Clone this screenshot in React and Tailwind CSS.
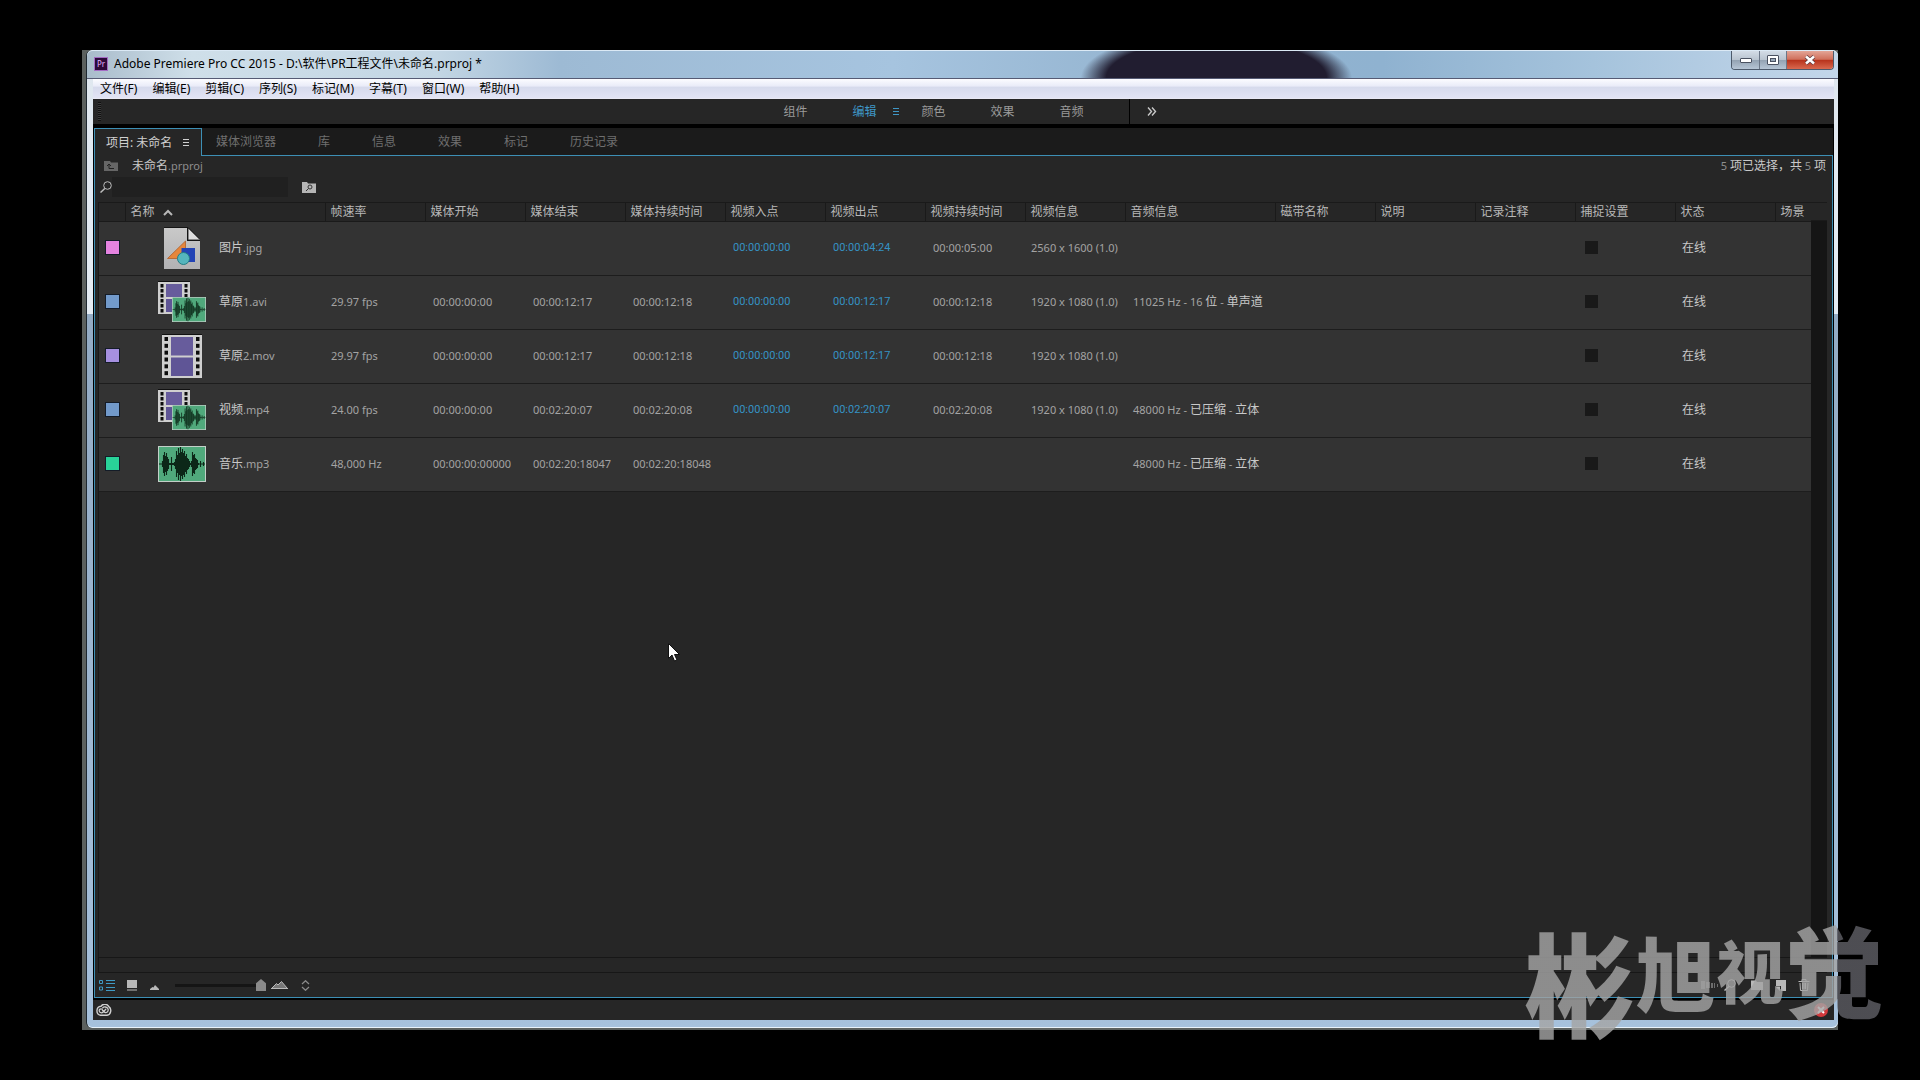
import { useState } from "react";
import clsx from "clsx";

const menus = ["文件(F)", "编辑(E)", "剪辑(C)", "序列(S)", "标记(M)", "字幕(T)", "窗口(W)", "帮助(H)"];
const workspaces = ["组件", "编辑", "颜色", "效果", "音频"];
const otherTabs = ["媒体浏览器", "库", "信息", "效果", "标记", "历史记录"];

const columns = [
  { key: "rate", label: "帧速率", pad: "pl-[6px]" },
  { key: "mediaStart", label: "媒体开始", pad: "pl-[8px]" },
  { key: "mediaEnd", label: "媒体结束", pad: "pl-[8px]" },
  { key: "mediaDuration", label: "媒体持续时间", pad: "pl-[8px]" },
  { key: "videoIn", label: "视频入点", pad: "pl-[8px]", hot: true },
  { key: "videoOut", label: "视频出点", pad: "pl-[8px]", hot: true },
  { key: "videoDuration", label: "视频持续时间", pad: "pl-[8px]" },
  { key: "videoInfo", label: "视频信息", pad: "pl-[6px]" },
  { key: "audioInfo", label: "音频信息", pad: "pl-[8px]", wide: true },
  { key: "tape", label: "磁带名称", pad: "pl-[6px]" },
  { key: "description", label: "说明", pad: "pl-[6px]" },
  { key: "logNote", label: "记录注释", pad: "pl-[6px]" },
  { key: "capture", label: "捕捉设置", pad: "pl-[10px]", check: true },
  { key: "status", label: "状态", pad: "pl-[7px]" },
];

const clips = [
  {
    name: "图片.jpg", kind: "image", swatch: "bg-[#e583e0]",
    videoIn: "00:00:00:00", videoOut: "00:00:04:24", videoDuration: "00:00:05:00",
    videoInfo: "2560 x 1600 (1.0)", status: "在线",
  },
  {
    name: "草原1.avi", kind: "av", swatch: "bg-[#729acb]", rate: "29.97 fps",
    mediaStart: "00:00:00:00", mediaEnd: "00:00:12:17", mediaDuration: "00:00:12:18",
    videoIn: "00:00:00:00", videoOut: "00:00:12:17", videoDuration: "00:00:12:18",
    videoInfo: "1920 x 1080 (1.0)", audioInfo: "11025 Hz - 16 位 - 单声道", status: "在线",
  },
  {
    name: "草原2.mov", kind: "video", swatch: "bg-[#a690e0]", rate: "29.97 fps",
    mediaStart: "00:00:00:00", mediaEnd: "00:00:12:17", mediaDuration: "00:00:12:18",
    videoIn: "00:00:00:00", videoOut: "00:00:12:17", videoDuration: "00:00:12:18",
    videoInfo: "1920 x 1080 (1.0)", status: "在线",
  },
  {
    name: "视频.mp4", kind: "av", swatch: "bg-[#729acb]", rate: "24.00 fps",
    mediaStart: "00:00:00:00", mediaEnd: "00:02:20:07", mediaDuration: "00:02:20:08",
    videoIn: "00:00:00:00", videoOut: "00:02:20:07", videoDuration: "00:02:20:08",
    videoInfo: "1920 x 1080 (1.0)", audioInfo: "48000 Hz - 已压缩 - 立体", status: "在线",
  },
  {
    name: "音乐.mp3", kind: "audio", swatch: "bg-[#29d398]", rate: "48,000 Hz",
    mediaStart: "00:00:00:00000", mediaEnd: "00:02:20:18047", mediaDuration: "00:02:20:18048",
    audioInfo: "48000 Hz - 已压缩 - 立体", status: "在线",
  },
];

// Chinese runs are set one size up and brighter than the latin text around them
function Mixed({ text }) {
  return text.split(/([\u4e00-\u9fff]+)/).map((part, i) =>
    i % 2 ? (
      <span key={i} className="text-xs text-[#c9c9c9]">{part}</span>
    ) : (
      part
    )
  );
}

function ImageThumb() {
  return (
    <svg width="36" height="42" viewBox="0 0 36 42">
      <defs>
        <linearGradient id="paper" x1="0" y1="0" x2="0" y2="1">
          <stop offset="0" stopColor="#c9c9c9" />
          <stop offset="1" stopColor="#b2b2b4" />
        </linearGradient>
      </defs>
      <path d="M0 1H23V14H36V42H0Z" fill="url(#paper)" />
      <path d="M24.500 1.500L36 12.500H24.500Z" fill="#dedede" />
      <path d="M0 0.500H24L36 12.500M23.500 1V13.500H36" fill="none" stroke="#151515" />
      <path d="M21.500 14V31.500H3.500Z" fill="#e6863b" stroke="#b0602a" strokeWidth="0.800" />
      <rect x="17.500" y="21" width="13.500" height="14" fill="#2343b5" />
      <circle cx="19.500" cy="31.500" r="6" fill="#55b5bd" stroke="#237d84" />
    </svg>
  );
}

function Film({ x = 0, y = 0, w, h, hole, rows }) {
  const step = (h - 2) / rows;
  const side = hole * 2 + 2;
  return (
    <g transform={`translate(${x} ${y})`}>
      <rect y="-1" width={w} height="1" fill="#111" />
      <rect width={w} height={h} fill="#cfcfcf" />
      <rect x={side} y="2" width={w - side * 2} height={h / 2 - 3} fill="#675c9c" />
      <rect x={side} y={h / 2 + 1} width={w - side * 2} height={h / 2 - 3} fill="#5f5596" />
      {Array.from({ length: rows }, (_, i) => (
        <g key={i} fill="#0c0c0c">
          <rect x="2.500" y={2 + i * step} width={hole} height={hole + 0.5} />
          <rect x={w - 2.5 - hole} y={2 + i * step} width={hole} height={hole + 0.5} />
        </g>
      ))}
    </g>
  );
}

const levels = [
  0.5, 0.5, 0.5, 3, 9, 12, 8, 11, 7, 5, 1, 1, 7, 1, 1, 2, 5, 13, 9, 16, 11, 17, 12,
  15, 11, 13, 8, 10, 6, 5, 3, 1, 3, 12, 9, 10, 6, 5, 4, 1, 0.5, 3, 0.5, 0.5, 2, 0.5,
];
const wave = levels.map((level, i) => `M${i + 1.5} ${18 - level}v${level * 2}`).join("");

function WaveThumb({ x = 0, y = 0, w = 48, h = 36 }) {
  return (
    <svg x={x} y={y} width={w} height={h} viewBox="0 0 48 36" preserveAspectRatio="none">
      <rect width="48" height="36" fill="#c3cfc8" />
      <rect x="1" y="1" width="46" height="34" fill="#50a97c" />
      <path d={wave} stroke="#0c2718" strokeWidth="1.100" />
    </svg>
  );
}

function Thumb({ kind }) {
  if (kind === "image") return <ImageThumb />;
  if (kind === "audio") return <WaveThumb />;
  if (kind === "video") {
    return (
      <svg width="40" height="44" viewBox="0 0 40 44">
        <Film y={1} w={40} h={43} hole={3.5} rows={6} />
      </svg>
    );
  }
  return (
    <svg width="48" height="41" viewBox="0 0 48 41">
      <Film y={1} w={32} h={32} hole={3} rows={6} />
      <WaveThumb x={14} y={16} w={34} h={25} />
    </svg>
  );
}

function MenuLines({ className }) {
  return (
    <svg width="6" height="9" viewBox="0 0 6 9" className={className}>
      <path d="M0 1.500H6M0 4.500H6M0 7.500H6" stroke="currentColor" />
    </svg>
  );
}

function TitleBar() {
  return (
    <header className="flex h-[29px] shrink-0 items-start justify-between rounded-t-md border-t border-b border-t-[#dbe9f5] border-b-[#565b74] bg-[radial-gradient(128px_45px_at_64.5%_100%,#211d30_86%,#4a5a7800_106%),linear-gradient(90deg,#a9bccb_0,#cfdfe9_6%,#c3d6e4_20%,#9dbad4_27%,#a6c4df_46%,#93b3cf_62%,#8fb2d0_74%,#a5c3dc_86%,#c3d6ea_100%)]">
      <div className="flex h-[26px] items-center gap-[6px] pl-[7px] text-xs text-black">
        <span className="flex size-[14px] items-center justify-center border border-[#a46cc4] bg-[#2d0a3a] text-[8px] leading-none text-[#e0b0ff]">
          Pr
        </span>
        <h1>Adobe Premiere Pro CC 2015 - D:\软件\PR工程文件\未命名.prproj *</h1>
      </div>
      <div className="mr-[4px] flex h-[19px] overflow-hidden rounded-b border border-t-0 border-[#4d5a6b]">
        <button type="button" aria-label="最小化" className="flex w-[28px] items-center justify-center border-r border-[#6b7788] bg-[linear-gradient(#d3dce6_0,#b9c4d0_48%,#94a3b3_52%,#b6c5d5_100%)]">
          <svg width="12" height="5" viewBox="0 0 12 5"><rect x="0.500" y="0.500" width="11" height="4" rx="0.500" fill="#fff" stroke="#4a5160" /></svg>
        </button>
        <button type="button" aria-label="最大化" className="flex w-[27px] items-center justify-center border-r border-[#6b7788] bg-[linear-gradient(#d3dce6_0,#b9c4d0_48%,#94a3b3_52%,#b6c5d5_100%)]">
          <svg width="12" height="10" viewBox="0 0 12 10">
            <rect x="0.500" y="0.500" width="11" height="9" rx="0.500" fill="#fff" stroke="#4a5160" />
            <rect x="3.500" y="3.500" width="5" height="3" fill="#9aa8b8" stroke="#4a5160" />
          </svg>
        </button>
        <button type="button" aria-label="关闭" className="flex w-[46px] items-center justify-center bg-[linear-gradient(#e3a597_0,#d0705c_46%,#b8341d_52%,#d9694f_100%)]">
          <svg width="12" height="10" viewBox="0 0 12 10">
            <path d="M2 1.500L10 8.500M10 1.500L2 8.500" stroke="#5b3a40" strokeWidth="4" />
            <path d="M2 1.500L10 8.500M10 1.500L2 8.500" stroke="#fff" strokeWidth="2.500" />
          </svg>
        </button>
      </div>
    </header>
  );
}

function WorkspaceBar() {
  const [active, setActive] = useState("编辑");

  return (
    <div className="flex h-[25px] shrink-0 items-stretch bg-[#262626] text-xs text-[#9a9a9a]">
      <div className="my-[3px] ml-[5px] w-[3px] bg-[repeating-linear-gradient(#111_0_1px,#3a3a3a_1px_2px)]" />
      <div className="flex flex-1 justify-center pl-5">
        {workspaces.map((name) => (
          <button
            type="button"
            key={name}
            onClick={() => setActive(name)}
            className={clsx("flex w-[69px] items-center gap-4", active === name && "text-[#3f97c6]")}
          >
            {name}
            {active === name && <MenuLines />}
          </button>
        ))}
        <button type="button" aria-label="更多" className="flex w-[43px] items-center border-l border-black pl-[17px] text-[#c8c8c8]">
          <svg width="10" height="9" viewBox="0 0 10 9">
            <path d="M1 0.500L4.500 4.500L1 8.500M5 0.500L8.500 4.500L5 8.500" fill="none" stroke="currentColor" strokeWidth="1.400" />
          </svg>
        </button>
      </div>
    </div>
  );
}

function PanelTabs() {
  return (
    <nav className="flex h-7 shrink-0 bg-[#1b1b1b] text-xs">
      <button type="button" className="flex w-[108px] items-center gap-[11px] border-x border-t border-[#3d8fb5] bg-[#262626] pl-[11px] whitespace-nowrap text-[#d0d0d0]">
        项目: 未命名
        <MenuLines />
      </button>
      <div className="flex flex-1 items-center gap-[42px] border-b border-[#3d8fb5] pl-[14px] text-[#6f6f6f]">
        {otherTabs.map((tab) => (
          <button type="button" key={tab}>{tab}</button>
        ))}
      </div>
    </nav>
  );
}

function ClipTable() {
  return (
    <table className="w-full table-fixed border-collapse text-left">
      <colgroup>
        <col className="w-[26px]" />
        <col className="w-[200px]" />
        {columns.map((col) => (
          <col key={col.key} className={col.wide ? "w-[150px]" : "w-[100px]"} />
        ))}
        <col />
      </colgroup>
      <thead>
        <tr className="h-[19px] border-y border-[#1a1a1a] text-xs leading-4 text-[#b8b8b8]">
          <th aria-label="标签" />
          <th className="border-l border-[#1a1a1a] pl-[5px] font-normal">
            <span className="flex items-center gap-2">
              名称
              <svg width="10" height="7" viewBox="0 0 10 7">
                <path d="M1 6L5 2L9 6" fill="none" stroke="currentColor" strokeWidth="2" />
              </svg>
            </span>
          </th>
          {columns.map((col) => (
            <th key={col.key} className="border-l border-[#1a1a1a] pl-[5px] font-normal whitespace-nowrap">{col.label}</th>
          ))}
          <th className="border-l border-[#1a1a1a] pl-[5px] font-normal whitespace-nowrap">场景</th>
        </tr>
      </thead>
      <tbody>
        {clips.map((clip) => (
          <tr key={clip.name} className="h-[54px] border-b border-[#1d1d1d] bg-[#333333] text-[11px] text-[#a3a3a3]">
            <td className="pb-[2px] pl-[6px]">
              <span className={clsx("block size-[15px] border border-[#141c28]", clip.swatch)} />
            </td>
            <td className="pl-[33px]">
              <div className="flex items-center gap-[13px]">
                <span className="mb-[2px] flex w-12 shrink-0 justify-center">
                  <Thumb kind={clip.kind} />
                </span>
                <span><Mixed text={clip.name} /></span>
              </div>
            </td>
            {columns.map((col) => (
              <td key={col.key} className={clsx("whitespace-nowrap", col.pad, col.hot && "font-[Roboto] text-[#3592c4]", col.check && "pb-[2px]")}>
                {col.check ? (
                  <input
                    type="checkbox"
                    aria-label={`${col.label} ${clip.name}`}
                    className="block size-[13px] appearance-none bg-[#191919] checked:bg-[#3592c4]"
                  />
                ) : (
                  clip[col.key] && <Mixed text={clip[col.key]} />
                )}
              </td>
            ))}
            <td />
          </tr>
        ))}
      </tbody>
    </table>
  );
}

function PanelFooter() {
  const [zoom, setZoom] = useState(100);

  return (
    <div className="flex h-6 shrink-0 items-center justify-between pr-[22px] pl-[4px] text-[#b9b9b9]">
      <div className="flex items-center">
        <button type="button" aria-label="列表视图" className="text-[#3f9ac4]">
          <svg width="16" height="11" viewBox="0 0 16 11">
            <path d="M0.500 0.500H3.500V3.500H0.500ZM0.500 7H3.500V10H0.500Z" fill="none" stroke="currentColor" />
            <path d="M7 0.500H16M7 3.500H16M7 7.500H16M7 10.500H16" stroke="currentColor" />
          </svg>
        </button>
        <button type="button" aria-label="图标视图" className="ml-3">
          <svg width="10" height="11" viewBox="0 0 10 11">
            <path d="M0 0H10V8H0ZM0 9.500H10V10.500H0Z" fill="currentColor" />
          </svg>
        </button>
        <svg width="9" height="5" viewBox="0 0 9 5" className="ml-[13px] mt-1">
          <path d="M0 5V4L2.500 2L3.500 2.500L5 0L9 4V5Z" fill="currentColor" />
        </svg>
        <input
          type="range"
          aria-label="缩放"
          value={zoom}
          onChange={(e) => setZoom(e.target.value)}
          className="ml-4 h-3 w-[91px] appearance-none bg-[linear-gradient(#151515,#151515)] bg-[length:100%_3px] bg-center bg-no-repeat [&::-webkit-slider-thumb]:h-3 [&::-webkit-slider-thumb]:w-[10px] [&::-webkit-slider-thumb]:appearance-none [&::-webkit-slider-thumb]:bg-[#8a8a8a] [&::-webkit-slider-thumb]:[clip-path:polygon(50%_0,100%_35%,100%_100%,0_100%,0_35%)]"
        />
        <svg width="17" height="8" viewBox="0 0 17 8" className="ml-[5px]">
          <path d="M1 7L5.500 2.500L7 4L10.500 0.500L16 7" fill="#777" stroke="currentColor" />
          <path d="M0 7.500H17" stroke="currentColor" />
        </svg>
        <button type="button" aria-label="排序图标" className="ml-[13px] text-[#8c8c8c]">
          <svg width="9" height="11" viewBox="0 0 9 11">
            <path d="M1 4L4.500 0.700L8 4M1 7L4.500 10.300L8 7" fill="none" stroke="currentColor" strokeWidth="1.200" />
          </svg>
        </button>
      </div>
      <div className="flex items-center gap-3">
        <button type="button" aria-label="自动匹配序列" className="mr-[-6px] text-[#6d6d6d]">
          <svg width="17" height="8" viewBox="0 0 17 8">
            <path d="M0 0H4V8H0ZM5 1H9V7H5ZM10 2H12V7H10ZM13 2H14V7H13ZM16 3H17V6H16Z" fill="currentColor" />
          </svg>
        </button>
        <button type="button" aria-label="查找" className="mr-[3px]">
          <svg width="12" height="12" viewBox="0 0 12 12">
            <circle cx="7.500" cy="4.500" r="3.800" fill="none" stroke="currentColor" />
            <path d="M4.800 7.500L0.500 11.500" stroke="currentColor" strokeWidth="1.500" />
          </svg>
        </button>
        <button type="button" aria-label="新建素材箱">
          <svg width="12" height="10" viewBox="0 0 12 10">
            <path d="M0 0.500H5L6 2H12V10H0Z" fill="currentColor" />
          </svg>
        </button>
        <button type="button" aria-label="新建项">
          <svg width="11" height="11" viewBox="0 0 11 11">
            <path d="M1 0H11V11H6V6H1Z" fill="currentColor" />
            <path d="M0 6.500H5V11Z" fill="currentColor" />
          </svg>
        </button>
        <button type="button" aria-label="清除">
          <svg width="12" height="12" viewBox="0 0 12 12">
            <path d="M0.500 2.500H11.500M4 2V0.500H8V2M2 4L2.500 11.500H9.500L10 4M4.500 4V10M6 4V10M7.500 4V10" fill="none" stroke="currentColor" />
          </svg>
        </button>
      </div>
    </div>
  );
}

function ProjectPanel() {
  const [query, setQuery] = useState("");

  return (
    <section className="flex min-h-0 flex-1 flex-col border-x border-b border-[#3d8fb5] bg-[#262626]">
      <div className="flex h-5 shrink-0 items-center pr-[6px] pl-[9px] text-[11px] text-[#8d8d8d]">
        <button type="button" aria-label="上一级" className="text-[#666]">
          <svg width="14" height="10" viewBox="0 0 14 10">
            <path d="M0 0H6L7 1.500H14V10H0Z" fill="currentColor" />
            <path d="M3 5L5 3L7 5M5 3.500V7.500H10" fill="none" stroke="#222" />
          </svg>
        </button>
        <span className="ml-[14px]"><Mixed text="未命名.prproj" /></span>
        <span className="ml-auto"><Mixed text="5 项已选择" /><span className="text-xs text-[#c9c9c9]">，</span><Mixed text="共 5 项" /></span>
      </div>
      <div className="mb-1 flex h-[22px] shrink-0 items-center pl-[5px]">
        <label className="flex items-center text-[#bdbdbd]">
          <svg width="12" height="12" viewBox="0 0 12 12">
            <circle cx="7.500" cy="4.500" r="3.800" fill="none" stroke="currentColor" />
            <path d="M4.800 7.500L0.500 11.500" stroke="currentColor" strokeWidth="1.500" />
          </svg>
          <input
            type="search"
            aria-label="搜索"
            value={query}
            onChange={(e) => setQuery(e.target.value)}
            className="h-5 w-[176px] bg-[#202020] px-1 text-xs outline-none"
          />
        </label>
        <button type="button" aria-label="从查询创建新的搜索素材箱" className="ml-[14px] text-[#b5b5b5]">
          <svg width="14" height="11" viewBox="0 0 14 11">
            <path d="M0 0H5L6 1.500H14V11H0Z" fill="currentColor" />
            <circle cx="8" cy="5" r="2" fill="none" stroke="#333" />
            <path d="M6.500 6.500L4 9" stroke="#333" />
          </svg>
        </button>
      </div>

      {/* Clip list with its scrollbars */}
      <div className="mr-[5px] ml-[3px] flex min-h-0 flex-1 border-l border-[#1a1a1a]">
        <div className="min-w-0 flex-1 overflow-hidden">
          <ClipTable />
        </div>
        <div className="flex w-4 flex-col">
          <div className="h-[19px] border-y border-[#1a1a1a]" />
          <div className="flex-1 bg-[#151515]" />
        </div>
      </div>
      <div className="mr-[5px] ml-[3px] h-4 shrink-0 border-y border-l border-[#171717]" />
      <PanelFooter />
    </section>
  );
}

function StatusBar() {
  return (
    <footer className="flex h-5 shrink-0 items-center justify-between bg-[#262626] pr-[6px] pl-[3px]">
      <svg width="16" height="12" viewBox="0 0 16 12" fill="none" stroke="#cfcfcf" strokeLinecap="round">
        <path d="M4.500 11.200H11A4.300 4.700 0 0 0 12.800 2.600A4.500 4.500 0 0 0 5 2.300A4.400 4.500 0 0 0 4.500 11.200Z" strokeWidth="1.400" />
        <path d="M6.300 5.200C4.500 4.200 3 5.500 3.200 7C3.500 9 6 9.300 7.200 8L9.800 5.200M6.800 3.800C8 2.500 10.500 2.800 11.600 4.200C13.200 6.400 11.500 8.800 9.500 8.600C8.700 8.500 8 7.800 6.500 6.200" strokeWidth="1.300" />
      </svg>
      <svg width="14" height="14" viewBox="0 0 14 14">
        <circle cx="7" cy="7" r="7" fill="#d2393c" />
        <path d="M4 4L10 10M10 4L4 10" stroke="#fff" strokeWidth="2" />
      </svg>
    </footer>
  );
}

function Watermark() {
  return (
    <div className="pointer-events-none absolute right-[36px] bottom-[38px] flex items-start bg-[linear-gradient(90deg,#a4a4a4d0_87%,#58585ee0_87%)] bg-clip-text leading-none font-black text-transparent">
      <span className="pt-2 text-[112px]">彬</span>
      <span className="pt-3 text-[80px]">旭</span>
      <span className="pt-4 text-[68px]">视</span>
      <span className="text-[100px]">觉</span>
    </div>
  );
}

export default function App() {
  return (
    <div className="relative h-screen overflow-hidden bg-black px-[82px] py-[50px] font-['Noto_Sans','Noto_Sans_CJK_SC',sans-serif]">
      <div className="flex h-full flex-col bg-[#5b605e] pb-[2px] pl-1">
        <main className="flex min-h-0 flex-1 flex-col rounded-md border-l border-[#1e2830] bg-[linear-gradient(#dfe7ef_0,#e4ecf4_27%,#93abc4_27%,#a6c1dc_100%)] shadow-[inset_0_-1px_0_#e8f2fa]">
          <TitleBar />
          <div className="mr-1 mb-2 ml-[6px] flex min-h-0 flex-1 flex-col bg-black">
            <nav className="flex h-5 shrink-0 items-center gap-[15px] border-b border-[#e9e9f4] bg-[linear-gradient(#fcfcff_0,#e9ebf8_38%,#d6daec_42%,#e2e4f4_100%)] pl-[7px] text-xs text-black">
              {menus.map((menu) => (
                <button type="button" key={menu}>{menu}</button>
              ))}
            </nav>
            <WorkspaceBar />
            <div className="flex min-h-0 flex-1 flex-col px-px pt-1 pb-[2px]">
              <PanelTabs />
              <ProjectPanel />
            </div>
            <StatusBar />
          </div>
        </main>
      </div>

      <svg width="12" height="19" viewBox="0 0 12 19" className="pointer-events-none absolute top-[643px] left-[668px]">
        <path d="M0.500 0.500V15.500L4 12L6.500 18L9 17L6.500 11.500H11.500Z" fill="#fff" stroke="#111" />
      </svg>
      <Watermark />
    </div>
  );
}
